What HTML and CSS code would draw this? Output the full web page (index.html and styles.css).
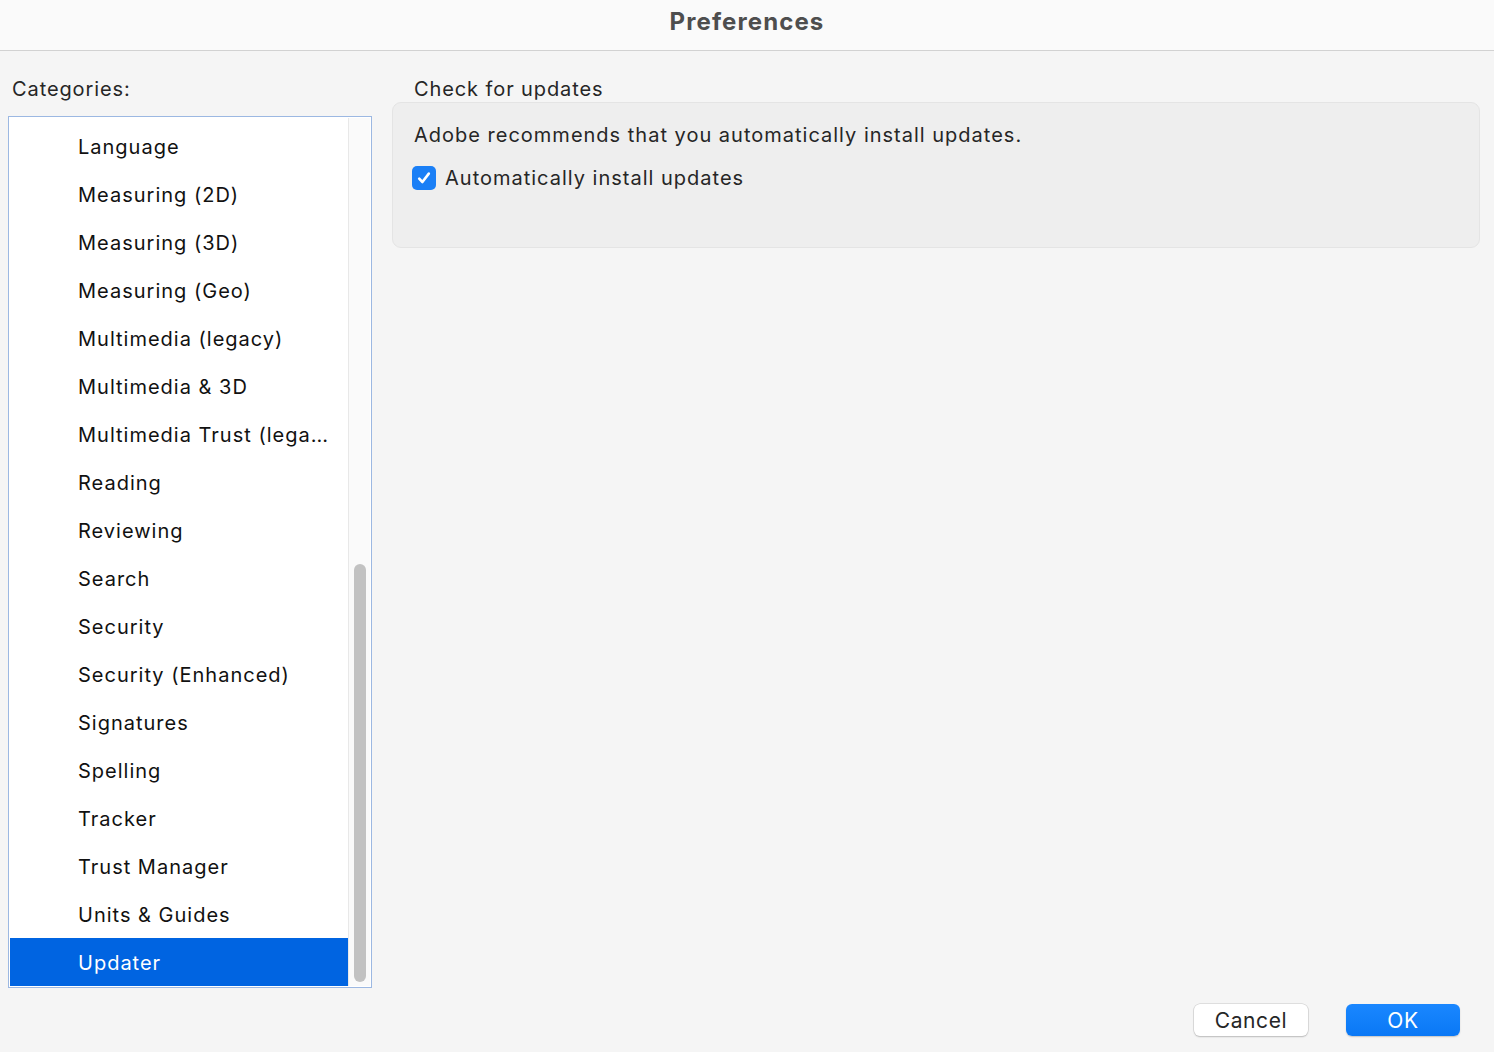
FILE: index.html
```html
<!DOCTYPE html>
<html>
<head>
<meta charset="utf-8">
<link rel="stylesheet" href="styles.css">
</head>
<body>
<div class="window">
  <header class="titlebar">Preferences</header>
  <main class="content">
    <section class="sidebar">
      <div class="cat-label">Categories:</div>
      <div class="listbox">
        <ul class="list">
          <li>Language</li>
          <li>Measuring (2D)</li>
          <li>Measuring (3D)</li>
          <li>Measuring (Geo)</li>
          <li>Multimedia (legacy)</li>
          <li>Multimedia &amp; 3D</li>
          <li>Multimedia Trust (lega…</li>
          <li>Reading</li>
          <li>Reviewing</li>
          <li>Search</li>
          <li>Security</li>
          <li>Security (Enhanced)</li>
          <li>Signatures</li>
          <li>Spelling</li>
          <li>Tracker</li>
          <li>Trust Manager</li>
          <li>Units &amp; Guides</li>
          <li class="selected">Updater</li>
        </ul>
        <div class="scrolltrack"><div class="thumb"></div></div>
      </div>
    </section>
    <section class="panel">
      <div class="group-title">Check for updates</div>
      <div class="groupbox">
        <p class="desc">Adobe recommends that you automatically install updates.</p>
        <label class="check">
          <span class="box"><svg width="16" height="16" viewBox="0 0 16 16"><path d="M3.2 8.6 L6.4 12 L12.8 3.6" fill="none" stroke="#fff" stroke-width="2.6" stroke-linecap="round" stroke-linejoin="round"/></svg></span>
          <span>Automatically install updates</span>
        </label>
      </div>
    </section>
  </main>
  <footer class="buttons">
    <button class="btn cancel">Cancel</button>
    <button class="btn ok">OK</button>
  </footer>
</div>
</body>
</html>
```
FILE: styles.css
```css
* { box-sizing: border-box; }
html, body { margin: 0; padding: 0; }
body {
  width: 1494px;
  height: 1052px;
  background: #f5f5f5;
  font-family: Inter, "Liberation Sans", sans-serif;
  color: #222;
  overflow: hidden;
  letter-spacing: 1px;
}
.window { display: flex; flex-direction: column; height: 1052px; }
.titlebar {
  height: 51px;
  background: #fafafa;
  border-bottom: 1px solid #d2d2d2;
  text-align: center;
  font-weight: 700;
  font-size: 24px;
  line-height: 43px;
  color: #4e4e4e;
  letter-spacing: 1.1px;
}
.content {
  display: flex;
  flex: 1;
  padding: 0 14px 0 8px;
  gap: 20px;
}
.sidebar { width: 364px; display: flex; flex-direction: column; }
.cat-label {
  font-size: 20px;
  padding: 26px 0 0 4px;
  height: 65px;
  color: #262626;
  letter-spacing: 0.9px;
}
.listbox {
  height: 872px;
  border: 1px solid #9cb8e2;
  background: #fff;
  display: flex;
  padding: 1px;
}
.list {
  list-style: none;
  margin: 0;
  padding: 4px 0 0 0;
  width: 338px;
  overflow: hidden;
  display: flex;
  flex-direction: column;
  justify-content: flex-end;
}
.list li {
  height: 48px;
  flex: none;
  font-size: 20px;
  line-height: 50px;
  padding-left: 68px;
  color: #111;
  white-space: nowrap;
}
.list li.selected { background: #0064e1; color: #fff; }
.scrolltrack {
  flex: 1;
  background: #fafafa;
  border-left: 1px solid #e8e8e8;
  display: flex;
  flex-direction: column;
  justify-content: flex-end;
  padding: 0 4px 4px 5px;
}
.thumb {
  height: 418px;
  background: #c2c2c2;
  border-radius: 6px;
}
.panel { flex: 1; display: flex; flex-direction: column; }
.group-title {
  font-size: 20px;
  padding: 26px 0 0 22px;
  height: 51px;
  color: #262626;
  letter-spacing: 0.9px;
}
.groupbox {
  height: 146px;
  background: #eeeeee;
  border: 1px solid #e4e4e4;
  border-radius: 9px;
  padding: 20px 21px;
}
.desc { margin: 0; font-size: 20px; color: #262626; }
.check {
  display: flex;
  align-items: center;
  gap: 9px;
  margin-top: 19px;
  margin-left: -2px;
  font-size: 20px;
  color: #262626;
}
.box {
  width: 24px;
  height: 24px;
  border-radius: 5px;
  background: #1a7ff6;
  display: flex;
  align-items: center;
  justify-content: center;
}
.buttons {
  display: flex;
  justify-content: flex-end;
  gap: 38px;
  padding: 0 34px 16px 0;
}
.btn {
  width: 114px;
  height: 32px;
  border-radius: 6px;
  font-family: Inter, "Liberation Sans", sans-serif;
  font-size: 21px;
  letter-spacing: 0.6px;
  border: none;
  padding: 0;
}
.cancel {
  background: #fff;
  color: #262626;
  box-shadow: 0 0 0 0.5px #c8c8c8, 0 1px 1.5px rgba(0,0,0,0.25);
}
.ok {
  background: linear-gradient(#1a87ff, #0a78f5);
  color: #fff;
  box-shadow: 0 1px 1.5px rgba(0,0,0,0.2);
}
```
